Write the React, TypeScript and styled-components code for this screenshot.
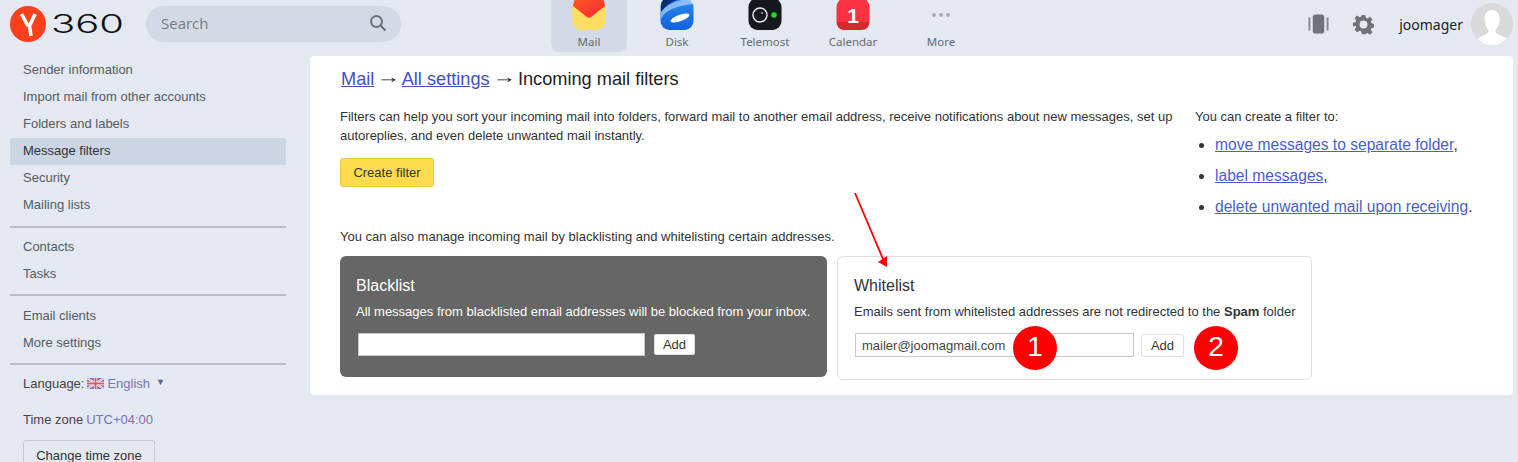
import React from 'react';
import styled, { createGlobalStyle } from 'styled-components';

const GlobalStyle = createGlobalStyle`
  html, body {
    margin: 0;
    padding: 0;
    height: 100%;
    background: #e3e8f1;
    overflow: hidden;
  }
  * { box-sizing: border-box; }
`;

const Page = styled.div`
  position: relative;
  width: 1518px;
  height: 462px;
  overflow: hidden;
  background: #e3e8f1;
  font-family: "Liberation Sans", Arial, sans-serif;
  font-size: 13px;
  color: #333;
`;

const Header = styled.header`
  display: flex;
  align-items: flex-start;
  height: 56px;
  padding: 0 5px 0 10px;
  overflow: hidden;
`;

const LogoLink = styled.div`
  display: flex;
  align-items: center;
  width: 136px;
  height: 36px;
  margin-top: 6px;
`;

const LogoNumber = styled.span`
  display: inline-block;
  margin-left: 5px;
  font-family: "Inter", sans-serif;
  font-size: 25px;
  font-weight: 300;
  line-height: 36px;
  color: #111;
  transform: scaleX(1.6);
  transform-origin: left center;
`;

const SearchBox = styled.div`
  display: flex;
  align-items: center;
  justify-content: space-between;
  width: 255px;
  height: 36px;
  margin-top: 6px;
  padding: 0 14px 2px 15px;
  border-radius: 18px;
  background: #d3dae6;
  font-family: "Open Sans", sans-serif;
  font-size: 15px;
  color: #777b82;
`;

const Nav = styled.nav`
  display: flex;
  gap: 12px;
  margin-left: 150px;
`;

const NavItem = styled.div<{ $active?: boolean }>`
  display: flex;
  flex-direction: column;
  align-items: center;
  width: 76px;
  height: 52px;
  border-radius: 0 0 8px 8px;
  background: ${({ $active }) => ($active ? '#d3dae6' : 'transparent')};
  font-family: "Noto Sans", sans-serif;
  font-size: 11.5px;
  line-height: 14px;
  color: #666a70;

  svg {
    display: block;
    margin-top: -3px;
    margin-bottom: 4px;
  }
`;

const HeaderRight = styled.div`
  display: flex;
  align-items: center;
  height: 48px;
  margin-left: auto;
`;

const UserName = styled.span`
  margin: 0 8px 0 25px;
  font-family: "Noto Sans", sans-serif;
  font-size: 14px;
  color: #222;
`;

const ToolIcon = styled.svg`
  display: block;
  margin-left: 24px;
`;

const Avatar = styled.svg`
  display: block;
  border-radius: 50%;
`;

const Body = styled.div`
  display: flex;
  align-items: flex-start;
`;

const Sidebar = styled.aside`
  flex: none;
  width: 276px;
  margin-left: 10px;
  padding-top: 1px;
`;

const MenuGroup = styled.div<{ $pb: number; $mb: number }>`
  padding-bottom: ${({ $pb }) => $pb}px;
  border-bottom: 2px solid #b9bdc4;
  margin-bottom: ${({ $mb }) => $mb}px;
`;

const MenuItem = styled.div<{ $active?: boolean }>`
  height: 27px;
  padding-left: 13px;
  line-height: 25px;
  color: ${({ $active }) => ($active ? '#333' : '#555b63')};
  background: ${({ $active }) => ($active ? '#ccd5e4' : 'transparent')};
`;

const LowerItem = styled(MenuItem)`
  line-height: 27px;
`;

const MetaRow = styled.div`
  display: flex;
  align-items: center;
  gap: 3px;
  height: 27px;
  padding-left: 13px;
  color: #444;
`;

const MetaValue = styled.span`
  color: #7477ad;
`;

const Caret = styled.span`
  margin-left: 3px;
  margin-bottom: 4px;
  font-size: 9px;
  color: #5e6280;
`;

const TimeRow = styled(MetaRow)`
  margin-top: 9px;
`;

const ZoneButton = styled.button`
  display: block;
  width: 132px;
  height: 30px;
  margin: 7px 0 0 13px;
  padding: 0;
  border: 1px solid #c6cad1;
  border-radius: 3px;
  background: transparent;
  font-family: inherit;
  font-size: 13px;
  color: #333;
`;

const Panel = styled.main`
  flex: none;
  width: 1203px;
  height: 339px;
  margin-left: 24px;
  padding: 12px 30px 0;
  border-radius: 4px;
  background: #fff;
`;

const Title = styled.h1`
  margin: 0 0 0 1px;
  font-size: 18.2px;
  font-weight: 400;
  line-height: 22px;
  color: #222;
`;

const TitleLink = styled.a`
  color: #3f51c6;
  text-decoration: underline;
`;

const TitleArrow = styled.span`
  display: inline-block;
  line-height: 0;
  vertical-align: 2px;
  transform: scaleX(1.3);
`;

const IntroRow = styled.div`
  display: flex;
  justify-content: space-between;
  height: 122px;
  margin-top: 17px;
`;

const IntroText = styled.div`
  width: 840px;
`;

const Paragraph = styled.p`
  margin: 0;
  line-height: 19px;
`;

const CreateButton = styled.button`
  display: block;
  width: 94px;
  height: 29px;
  margin-top: 13px;
  padding: 0;
  border: 1px solid #e8c84a;
  border-radius: 3px;
  background: #ffdb4d;
  font-family: inherit;
  font-size: 13px;
  color: #333;
`;

const Tips = styled.div`
  width: 288px;
`;

const TipList = styled.ul`
  margin: 3px 0 0;
  padding: 0 0 0 20px;
  font-size: 15.6px;
`;

const Tip = styled.li`
  height: 31px;
  line-height: 31px;
`;

const TipLink = styled.a`
  color: #4a5fc9;
  text-decoration: underline;
`;

const ListsNote = styled.p`
  margin: 0 0 11px;
  line-height: 16px;
`;

const Cards = styled.div`
  display: flex;
  align-items: flex-start;
  gap: 10px;
`;

const Card = styled.section<{ $dark?: boolean }>`
  width: ${({ $dark }) => ($dark ? '487px' : '475px')};
  height: ${({ $dark }) => ($dark ? '121px' : '124px')};
  padding: ${({ $dark }) => ($dark ? '19px 10px 0 16px' : '18px 10px 0 16px')};
  border: ${({ $dark }) => ($dark ? 'none' : '1px solid #dedede')};
  border-radius: 6px;
  background: ${({ $dark }) => ($dark ? '#666' : '#fff')};
  color: ${({ $dark }) => ($dark ? '#fff' : '#333')};
`;

const CardTitle = styled.h2`
  margin: 0;
  font-size: 16px;
  font-weight: 400;
  line-height: 22px;
`;

const CardText = styled.p`
  margin: 6px 0 0;
  font-size: 13px;
  line-height: 18px;
  white-space: nowrap;
`;

const Form = styled.div<{ $gap: number; $inset: number }>`
  display: flex;
  align-items: flex-start;
  gap: ${({ $gap }) => $gap}px;
  margin-top: 12px;
  padding-left: ${({ $inset }) => $inset}px;
`;

const FieldInput = styled.input<{ $w: number; $h: number }>`
  display: block;
  width: ${({ $w }) => $w}px;
  height: ${({ $h }) => $h}px;
  padding: 0 6px;
  border: 1px solid #c9c9c9;
  background: #fff;
  font-family: inherit;
  font-size: 13px;
  color: #444;
  outline: none;
`;

const AddButton = styled.button<{ $w: number; $h: number }>`
  display: block;
  width: ${({ $w }) => $w}px;
  height: ${({ $h }) => $h}px;
  margin-top: 1px;
  padding: 0;
  border: 1px solid #e0e0e0;
  border-radius: 2px;
  background: #fff;
  font-family: inherit;
  font-size: 13px;
  color: #333;
`;

const Marker = styled.div<{ $x: number }>`
  position: absolute;
  left: ${({ $x }) => $x}px;
  top: 326px;
  width: 44px;
  height: 44px;
  border-radius: 50%;
  background: #f00;
  color: #fff;
  font-size: 28px;
  line-height: 41px;
  text-align: center;
`;

const ArrowOverlay = styled.svg`
  position: absolute;
  left: 845px;
  top: 185px;
`;

const MailIcon = () => (
  <svg width="34" height="34" viewBox="0 0 34 34">
    <defs>
      <linearGradient id="mailTop" x1="0" y1="0" x2="1" y2="1">
        <stop offset="0" stopColor="#ff5a1f" />
        <stop offset="1" stopColor="#f5263a" />
      </linearGradient>
    </defs>
    <rect x="0.5" y="1" width="33" height="32" rx="9" fill="#ffdd60" />
    <path d="M2 4 Q4 1 9 1 H25 Q30 1 32 4 L33 9 L19 20 Q17 21.5 15 20 L1 9 Z" fill="url(#mailTop)" />
  </svg>
);

const DiskIcon = () => (
  <svg width="34" height="34" viewBox="0 0 34 34">
    <defs>
      <linearGradient id="diskBg" x1="0" y1="0" x2="0" y2="1">
        <stop offset="0" stopColor="#2b8bf2" />
        <stop offset="1" stopColor="#0f62d8" />
      </linearGradient>
    </defs>
    <rect x="0.5" y="1" width="33" height="32" rx="9" fill="url(#diskBg)" />
    <path d="M1 15 Q8 5 20 2 L26 1 L9 1 Q1 1 1 9 Z" fill="#0b2e72" />
    <path d="M1 22 Q6 10 33 7 L33 4 Q32 1.5 29 1.5 Q8 5 1 15 Z" fill="#dfeaf8" opacity="0.55" />
    <ellipse cx="20" cy="21" rx="10" ry="3.2" transform="rotate(-20 20 21)" fill="#fff" />
  </svg>
);

const TelemostIcon = () => (
  <svg width="34" height="34" viewBox="0 0 34 34">
    <rect x="0.5" y="1" width="33" height="32" rx="9" fill="#15191f" />
    <circle cx="12" cy="18" r="7" fill="none" stroke="#f2f2f2" strokeWidth="1.4" />
    <circle cx="14" cy="16" r="1.1" fill="#9aa0a8" />
    <circle cx="26" cy="18" r="2.8" fill="#28d622" />
  </svg>
);

const CalendarIcon = () => (
  <svg width="34" height="34" viewBox="0 0 34 34">
    <rect x="0.5" y="1" width="33" height="32" rx="9" fill="#fb3340" />
    <path d="M0.5 25 H33.5 V24 Q33.5 33 25 33 H9 Q0.5 33 0.5 24 Z" fill="#d9272f" />
    <text x="17" y="25.5" textAnchor="middle" fontFamily="Liberation Sans" fontWeight="700" fontSize="21" fill="#fff">1</text>
  </svg>
);

const MoreIcon = () => (
  <svg width="34" height="34" viewBox="0 0 34 34">
    <circle cx="10" cy="18" r="2" fill="#a9adb5" />
    <circle cx="17" cy="18" r="2" fill="#a9adb5" />
    <circle cx="24" cy="18" r="2" fill="#a9adb5" />
  </svg>
);

const FlagIcon = () => (
  <svg width="17" height="11" viewBox="0 0 17 11">
    <rect width="17" height="11" rx="1" fill="#6b78b8" />
    <path d="M0 0 L17 11 M17 0 L0 11" stroke="#fff" strokeWidth="2" />
    <path d="M0 0 L17 11 M17 0 L0 11" stroke="#e87a88" strokeWidth="0.8" />
    <path d="M8.5 0 V11 M0 5.5 H17" stroke="#fff" strokeWidth="3.4" />
    <path d="M8.5 0 V11 M0 5.5 H17" stroke="#e2566a" strokeWidth="2" />
  </svg>
);

export default function App() {
  return (
    <Page>
      <GlobalStyle />
      <Header>
        <LogoLink>
          <svg width="36" height="36" viewBox="0 0 36 36">
            <circle cx="18" cy="18" r="18" fill="#fc3f1d" />
            <path d="M11.5 8 L18 20 M25 8 L19.5 20 L21 30" fill="none" stroke="#fff" strokeWidth="3.6" />
          </svg>
          <LogoNumber>360</LogoNumber>
        </LogoLink>
        <SearchBox>
          Search
          <svg width="18" height="18" viewBox="0 0 18 18" fill="none" stroke="#6d7178" strokeWidth="2">
            <circle cx="7.5" cy="7.5" r="5.5" />
            <path d="M11.5 11.5 L16.5 16.5" />
          </svg>
        </SearchBox>
        <Nav>
          <NavItem $active>
            <MailIcon />
            Mail
          </NavItem>
          <NavItem>
            <DiskIcon />
            Disk
          </NavItem>
          <NavItem>
            <TelemostIcon />
            Telemost
          </NavItem>
          <NavItem>
            <CalendarIcon />
            Calendar
          </NavItem>
          <NavItem>
            <MoreIcon />
            More
          </NavItem>
        </Nav>
        <HeaderRight>
          <ToolIcon width="21" height="20" viewBox="0 0 22 20">
            <rect x="5" y="0" width="12" height="20" rx="3" fill="#6f7378" />
            <rect x="0.5" y="3" width="2" height="14" rx="1" fill="#85898e" />
            <rect x="19.5" y="3" width="2" height="14" rx="1" fill="#85898e" />
          </ToolIcon>
          <ToolIcon width="21" height="21" viewBox="0 0 24 24">
            <path
              fill="#6f7378"
              fillRule="evenodd"
              d="M10 1h4l.7 3.2 1.9.8 2.8-1.8 2.8 2.8-1.8 2.8.8 1.9 3.2.7v4l-3.2.7-.8 1.9 1.8 2.8-2.8 2.8-2.8-1.8-1.9.8L14 23h-4l-.7-3.2-1.9-.8-2.8 1.8-2.8-2.8 1.8-2.8-.8-1.9L-.4 14v-4l3.2-.7.8-1.9-1.8-2.8 2.8-2.8 2.8 1.8 1.9-.8zM12 7.5a4.5 4.5 0 1 0 0 9 4.5 4.5 0 0 0 0-9z"
            />
          </ToolIcon>
          <UserName>joomager</UserName>
          <Avatar width="42" height="42" viewBox="0 0 42 42">
            <rect width="42" height="42" fill="#d9d9d9" />
            <path d="M21 7 C14.5 7 13 13 14 19 C14.6 23 16.5 26 17.5 27 C17.5 30 15 31.5 11 33 L6 36 L8 42 H34 L37 36 C33 33.5 27 32 24.5 29.5 L24.5 27 C26.5 25 28 22 28.5 18 C29 12 27 7 21 7 Z" fill="#fff" />
          </Avatar>
        </HeaderRight>
      </Header>
      <Body>
        <Sidebar>
          <MenuGroup $pb={7} $mb={5}>
            <MenuItem>Sender information</MenuItem>
            <MenuItem>Import mail from other accounts</MenuItem>
            <MenuItem>Folders and labels</MenuItem>
            <MenuItem $active>Message filters</MenuItem>
            <MenuItem>Security</MenuItem>
            <MenuItem>Mailing lists</MenuItem>
          </MenuGroup>
          <MenuGroup $pb={7} $mb={6}>
            <LowerItem>Contacts</LowerItem>
            <LowerItem>Tasks</LowerItem>
          </MenuGroup>
          <MenuGroup $pb={7} $mb={5}>
            <LowerItem>Email clients</LowerItem>
            <LowerItem>More settings</LowerItem>
          </MenuGroup>
          <MetaRow>
            Language:
            <FlagIcon />
            <MetaValue>English</MetaValue>
            <Caret>▼</Caret>
          </MetaRow>
          <TimeRow>
            Time zone
            <MetaValue>UTC+04:00</MetaValue>
          </TimeRow>
          <ZoneButton>Change time zone</ZoneButton>
        </Sidebar>
        <Panel>
          <Title>
            <TitleLink>Mail</TitleLink> <TitleArrow>→</TitleArrow> <TitleLink>All settings</TitleLink> <TitleArrow>→</TitleArrow> Incoming mail filters
          </Title>
          <IntroRow>
            <IntroText>
              <Paragraph>
                Filters can help you sort your incoming mail into folders, forward mail to another email address, receive notifications about new messages, set up autoreplies, and even delete unwanted mail instantly.
              </Paragraph>
              <CreateButton>Create filter</CreateButton>
            </IntroText>
            <Tips>
              <Paragraph>You can create a filter to:</Paragraph>
              <TipList>
                <Tip><TipLink>move messages to separate folder</TipLink>,</Tip>
                <Tip><TipLink>label messages</TipLink>,</Tip>
                <Tip><TipLink>delete unwanted mail upon receiving</TipLink>.</Tip>
              </TipList>
            </Tips>
          </IntroRow>
          <ListsNote>You can also manage incoming mail by blacklisting and whitelisting certain addresses.</ListsNote>
          <Cards>
            <Card $dark>
              <CardTitle>Blacklist</CardTitle>
              <CardText>All messages from blacklisted email addresses will be blocked from your inbox.</CardText>
              <Form $gap={9} $inset={2}>
                <FieldInput $w={287} $h={23} />
                <AddButton $w={41} $h={21}>Add</AddButton>
              </Form>
            </Card>
            <Card>
              <CardTitle>Whitelist</CardTitle>
              <CardText>
                Emails sent from whitelisted addresses are not redirected to the <b>Spam</b> folder
              </CardText>
              <Form $gap={7} $inset={1}>
                <FieldInput $w={279} $h={24} defaultValue="mailer@joomagmail.com" />
                <AddButton $w={43} $h={23}>Add</AddButton>
              </Form>
            </Card>
          </Cards>
        </Panel>
      </Body>
      <ArrowOverlay width="50" height="90" viewBox="0 0 50 90">
        <path d="M10 8 L38 74" stroke="#f00" strokeWidth="1.8" />
        <path d="M42 82 L33 77 L42 71 Z" fill="#f00" />
      </ArrowOverlay>
      <Marker $x={1013}>1</Marker>
      <Marker $x={1194}>2</Marker>
    </Page>
  );
}
